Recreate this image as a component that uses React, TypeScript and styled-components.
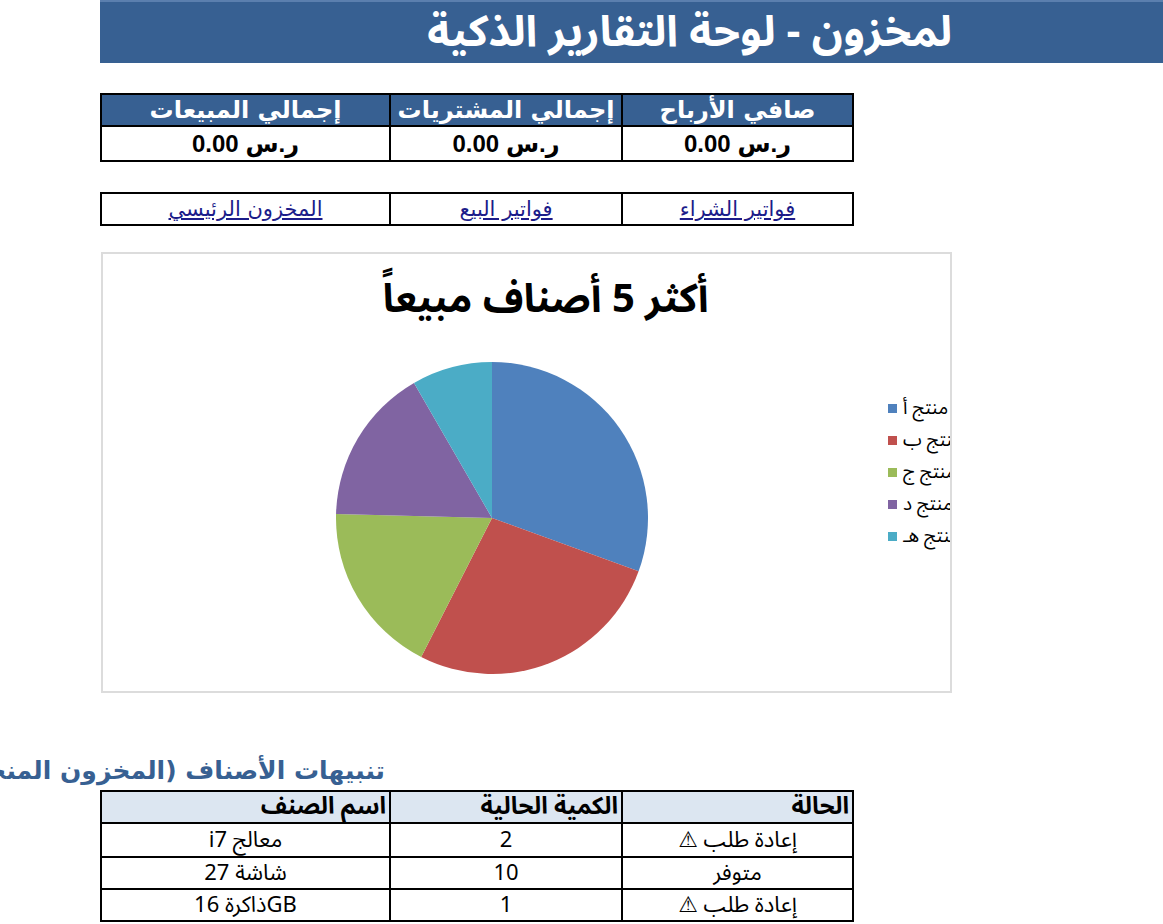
import React from 'react';
import styled, { createGlobalStyle } from 'styled-components';

const GlobalStyle = createGlobalStyle`
  html, body {
    margin: 0;
    padding: 0;
    background: #ffffff;
  }
  body {
    font-family: "Noto Sans Arabic", "DejaVu Sans", sans-serif;
    color: #000;
  }
`;

interface Slice {
  label: string;
  value: number;
  color: string;
}

const slices: Slice[] = [
  { label: 'منتج أ', value: 110, color: '#4f81bd' },
  { label: 'منتج ب', value: 97, color: '#c0504d' },
  { label: 'منتج ج', value: 64.5, color: '#9bbb59' },
  { label: 'منتج د', value: 58.5, color: '#8064a2' },
  { label: 'منتج هـ', value: 30, color: '#4bacc6' },
];

const alerts = [
  { status: 'إعادة طلب ⚠', qty: '2', name: 'معالج i7' },
  { status: 'متوفر', qty: '10', name: 'شاشة 27' },
  { status: 'إعادة طلب ⚠', qty: '1', name: 'GBذاكرة 16' },
];

const PieChart: React.FC<{ data: Slice[]; r: number }> = ({ data, r }) => {
  const total = data.reduce((s, d) => s + d.value, 0);
  let angle = 0;
  const pt = (a: number) => {
    const rad = (a / 360) * Math.PI * 2;
    return [r + r * Math.sin(rad), r - r * Math.cos(rad)];
  };
  return (
    <svg width={r * 2} height={r * 2} viewBox={`0 0 ${r * 2} ${r * 2}`}>
      {data.map((d) => {
        const start = angle;
        const sweep = (d.value / total) * 360;
        angle += sweep;
        const [x1, y1] = pt(start);
        const [x2, y2] = pt(start + sweep);
        const large = sweep > 180 ? 1 : 0;
        return (
          <path
            key={d.label}
            d={`M${r} ${r} L${x1} ${y1} A${r} ${r} 0 ${large} 1 ${x2} ${y2} Z`}
            fill={d.color}
          />
        );
      })}
    </svg>
  );
};

const Cols = () => (
  <colgroup>
    <col style={{ width: 231 }} />
    <col style={{ width: 232 }} />
    <col style={{ width: 289 }} />
  </colgroup>
);

const App: React.FC = () => {
  return (
    <>
      <GlobalStyle />
      <Sheet>
        <Banner>
          <BannerText>لمخزون - لوحة التقارير الذكية</BannerText>
        </Banner>

        <SummaryTable>
          <Cols />
          <tbody>
            <tr>
              <HeadCell>صافي الأرباح</HeadCell>
              <HeadCell>إجمالي المشتريات</HeadCell>
              <HeadCell>إجمالي المبيعات</HeadCell>
            </tr>
            <tr>
              <ValueCell>ر.س 0.00</ValueCell>
              <ValueCell>ر.س 0.00</ValueCell>
              <ValueCell>ر.س 0.00</ValueCell>
            </tr>
          </tbody>
        </SummaryTable>

        <LinksTable>
          <Cols />
          <tbody>
            <tr>
              <LinkCell><SheetLink href="#">فواتير الشراء</SheetLink></LinkCell>
              <LinkCell><SheetLink href="#">فواتير البيع</SheetLink></LinkCell>
              <LinkCell><SheetLink href="#">المخزون الرئيسي</SheetLink></LinkCell>
            </tr>
          </tbody>
        </LinksTable>

        <ChartBox>
          <ChartTitle>أكثر 5 أصناف مبيعاً</ChartTitle>
          <ChartBody>
            <PieWrap>
              <PieChart data={slices} r={156} />
            </PieWrap>
            <Legend>
              {slices.map((s) => (
                <LegendItem key={s.label}>
                  <Swatch $color={s.color} />
                  <LegendLabel>{s.label}</LegendLabel>
                </LegendItem>
              ))}
            </Legend>
          </ChartBody>
        </ChartBox>

        <AlertTitle>تنبيهات الأصناف (المخزون المنخفض)</AlertTitle>

        <AlertTable>
          <Cols />
          <tbody>
            <tr>
              <AlertHead>الحالة</AlertHead>
              <AlertHead>الكمية الحالية</AlertHead>
              <AlertHead>اسم الصنف</AlertHead>
            </tr>
            {alerts.map((a, i) => (
              <AlertRow key={i} $h={i === 0 ? 32 : 30}>
                <AlertCell>{a.status}</AlertCell>
                <AlertCell>{a.qty}</AlertCell>
                <AlertCell>{a.name}</AlertCell>
              </AlertRow>
            ))}
          </tbody>
        </AlertTable>
      </Sheet>
    </>
  );
};

const Sheet = styled.div`
  width: 1163px;
  height: 924px;
  overflow: hidden;
  display: flex;
  flex-direction: column;
`;

const Banner = styled.div`
  margin-left: 100px;
  height: 63px;
  background: #376092;
  border-top: 2px solid #5b7fae;
  box-sizing: border-box;
  display: flex;
  justify-content: flex-end;
  align-items: center;
  padding-right: 211px;
`;

const BannerText = styled.div`
  direction: rtl;
  color: #ffffff;
  font-weight: bold;
  font-size: 43px;
  line-height: 52px;
  white-space: nowrap;
`;

const BaseTable = styled.table`
  direction: rtl;
  margin-left: 100px;
  width: 752px;
  border-collapse: collapse;
  table-layout: fixed;
  td {
    border: 2px solid #000;
    padding: 0 3px;
    white-space: nowrap;
    overflow: hidden;
    box-sizing: border-box;
  }
`;

const SummaryTable = styled(BaseTable)`
  margin-top: 30px;
`;

const HeadCell = styled.td`
  height: 32px;
  line-height: 28px;
  background: #376092;
  color: #ffffff;
  font-family: "DejaVu Sans", sans-serif;
  font-weight: bold;
  font-size: 24px;
  text-align: center;
`;

const ValueCell = styled.td`
  height: 35px;
  line-height: 30px;
  font-family: "Liberation Sans", "DejaVu Sans", sans-serif;
  font-weight: bold;
  font-size: 24px;
  text-align: center;
`;

const LinksTable = styled(BaseTable)`
  margin-top: 30px;
`;

const LinkCell = styled.td`
  height: 32px;
  line-height: 28px;
  text-align: center;
  font-family: "DejaVu Sans", sans-serif;
  font-size: 21px;
`;

const SheetLink = styled.a`
  color: #1c1c8a;
  text-decoration: underline;
`;

const ChartBox = styled.div`
  margin-left: 101px;
  margin-top: 26px;
  width: 851px;
  height: 441px;
  box-sizing: border-box;
  border: 2px solid #dcdcdc;
  overflow: hidden;
  display: flex;
  flex-direction: column;
`;

const ChartTitle = styled.div`
  direction: rtl;
  padding-top: 24px;
  padding-left: 38px;
  height: 44px;
  line-height: 44px;
  font-size: 40px;
  font-weight: bold;
  text-align: center;
  white-space: nowrap;
`;

const ChartBody = styled.div`
  display: flex;
  align-items: flex-start;
  margin-top: 40px;
`;

const PieWrap = styled.div`
  margin-left: 233px;
  width: 312px;
  height: 312px;
  flex-shrink: 0;
`;

const Legend = styled.div`
  margin-left: 240px;
  margin-top: 30px;
  display: flex;
  flex-direction: column;
  flex-shrink: 0;
`;

const LegendItem = styled.div`
  display: flex;
  align-items: center;
  height: 32px;
  gap: 6px;
`;

const Swatch = styled.span<{ $color: string }>`
  width: 9px;
  height: 9px;
  background: ${({ $color }) => $color};
  flex-shrink: 0;
`;

const LegendLabel = styled.span`
  direction: rtl;
  font-size: 19px;
  line-height: 24px;
  white-space: nowrap;
`;

const AlertTitle = styled.div`
  margin-top: 60px;
  width: 385px;
  height: 36px;
  line-height: 36px;
  direction: rtl;
  overflow: hidden;
  white-space: nowrap;
  color: #376092;
  font-family: "DejaVu Sans", sans-serif;
  font-weight: bold;
  font-size: 25px;
`;

const AlertTable = styled(BaseTable)`
  margin-top: 1px;
`;

const AlertHead = styled.td`
  height: 32px;
  line-height: 28px;
  background: #dce6f1;
  font-weight: bold;
  font-size: 24px;
  text-align: right;
`;

const AlertRow = styled.tr<{ $h: number }>`
  td {
    height: ${({ $h }) => $h + 2}px;
    line-height: ${({ $h }) => $h - 2}px;
  }
`;

const AlertCell = styled.td`
  font-size: 22px;
  text-align: center;
`;

export default App;
